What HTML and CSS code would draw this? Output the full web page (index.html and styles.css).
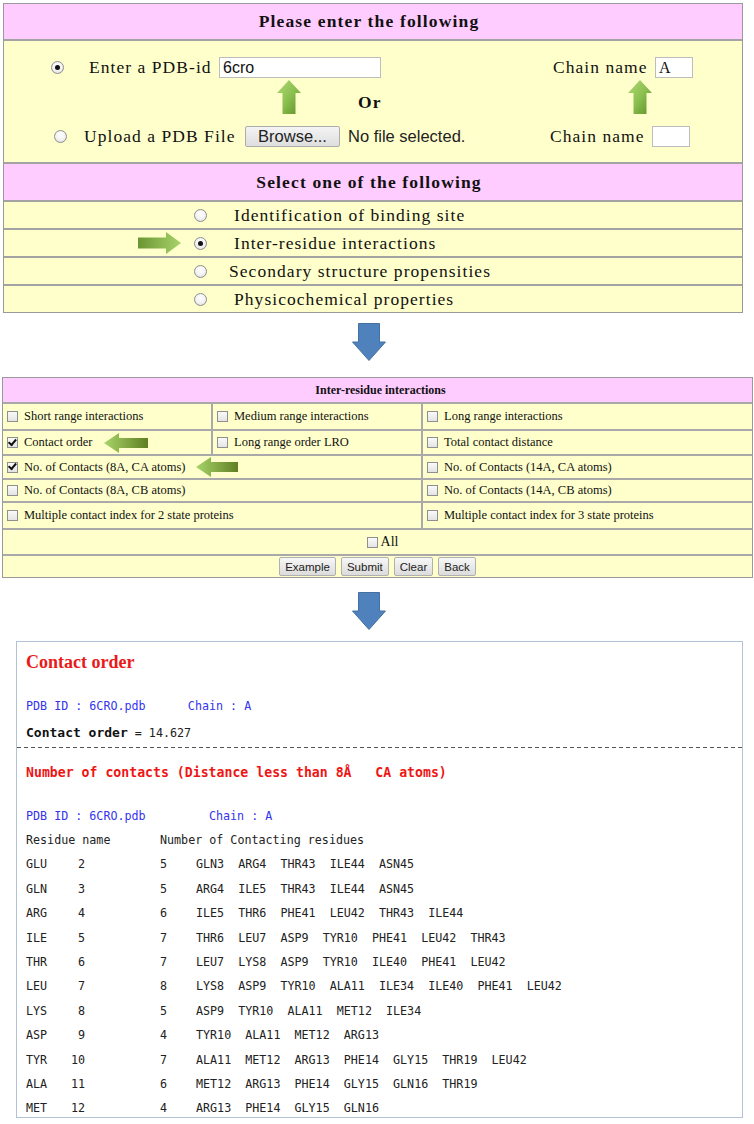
FILE: index.html
```html
<!DOCTYPE html>
<html>
<head>
<meta charset="utf-8">
<title>Inter-residue interactions</title>
<link rel="stylesheet" href="styles.css">
</head>
<body>
<svg class="defs" width="0" height="0" aria-hidden="true">
  <defs>
    <linearGradient id="gUp" x1="0" y1="0" x2="1" y2="1">
      <stop offset="0" stop-color="#b2da78"/>
      <stop offset="0.5" stop-color="#8cc050"/>
      <stop offset="1" stop-color="#5e8f2a"/>
    </linearGradient>
    <linearGradient id="gRight" x1="0" y1="0" x2="1" y2="0">
      <stop offset="0" stop-color="#6a9533"/>
      <stop offset="1" stop-color="#a8d46a"/>
    </linearGradient>
    <linearGradient id="gLeft" x1="0" y1="0" x2="1" y2="0">
      <stop offset="0" stop-color="#a8d46a"/>
      <stop offset="1" stop-color="#5f7f22"/>
    </linearGradient>
  </defs>
</svg>
<main class="page">
  <section class="panel">
    <div class="phead">Please enter the following</div>
    <div class="entry">
      <div class="erow r1">
        <span class="radio on"></span>
        <span class="elabel l1">Enter a PDB-id</span>
        <span class="tinput pdb">6cro</span>
        <span class="chain c1"><span class="clabel">Chain name</span><span class="tinput ch">A</span></span>
      </div>
      <div class="erow r2">
        <svg class="uparrow a1" width="24" height="34" viewBox="0 0 24 34"><path d="M12 0 L24 13 L18.5 13 L18.5 34 L5.5 34 L5.5 13 L0 13 Z" fill="url(#gUp)"/></svg>
        <span class="or">Or</span>
        <svg class="uparrow a2" width="24" height="34" viewBox="0 0 24 34"><path d="M12 0 L24 13 L18.5 13 L18.5 34 L5.5 34 L5.5 13 L0 13 Z" fill="url(#gUp)"/></svg>
      </div>
      <div class="erow r3">
        <span class="radio"></span>
        <span class="elabel l3">Upload a PDB File</span>
        <span class="fbtn">Browse...</span>
        <span class="nofile">No file selected.</span>
        <span class="chain c2"><span class="clabel">Chain name</span><span class="tinput ch"></span></span>
      </div>
    </div>
    <div class="phead sep">Select one of the following</div>
    <div class="opt"><span class="lead"></span><span class="radio"></span><span class="otext">Identification of binding site</span></div>
    <div class="opt"><span class="lead"><svg class="rarrow" width="43" height="22" viewBox="0 0 43 22"><path d="M0 5.5 H28 V0 L43 11 L28 22 V16.5 H0 Z" fill="url(#gRight)"/></svg></span><span class="radio on"></span><span class="otext">Inter-residue interactions</span></div>
    <div class="opt"><span class="lead"></span><span class="radio"></span><span class="otext shift">Secondary structure propensities</span></div>
    <div class="opt last"><span class="lead"></span><span class="radio"></span><span class="otext">Physicochemical properties</span></div>
  </section>

  <div class="downwrap d1">
    <svg class="downarrow" width="34" height="38" viewBox="0 0 34 38"><path d="M6.5 0.5 H27.5 V19 H33.5 L17 37.5 L0.5 19 H6.5 Z" fill="#4f81bd" stroke="#44719f" stroke-width="1"/></svg>
  </div>

  <section class="ri">
    <div class="rhead">Inter-residue interactions</div>
    <div class="cell"><span class="cb"></span>Short range interactions</div>
    <div class="cell"><span class="cb"></span>Medium range interactions</div>
    <div class="cell"><span class="cb"></span>Long range interactions</div>

    <div class="cell"><span class="cb on"></span>Contact order<svg class="larrow la1" width="44" height="20" viewBox="0 0 44 20"><path d="M0 10 L15 0 V5 H44 V15 H15 V20 Z" fill="url(#gLeft)"/></svg></div>
    <div class="cell"><span class="cb"></span>Long range order LRO</div>
    <div class="cell"><span class="cb"></span>Total contact distance</div>

    <div class="cell span2"><span class="cb on"></span>No. of Contacts (8A, CA atoms)<svg class="larrow la2" width="42" height="20" viewBox="0 0 42 20"><path d="M0 10 L15 0 V5 H42 V15 H15 V20 Z" fill="url(#gLeft)"/></svg></div>
    <div class="cell"><span class="cb"></span>No. of Contacts (14A, CA atoms)</div>

    <div class="cell span2"><span class="cb"></span>No. of Contacts (8A, CB atoms)</div>
    <div class="cell"><span class="cb"></span>No. of Contacts (14A, CB atoms)</div>

    <div class="cell span2"><span class="cb"></span>Multiple contact index for 2 state proteins</div>
    <div class="cell"><span class="cb"></span>Multiple contact index for 3 state proteins</div>

    <div class="cell full allrow"><span class="cb"></span>All</div>
    <div class="cell full btnrow">
      <span class="btn">Example</span>
      <span class="btn">Submit</span>
      <span class="btn">Clear</span>
      <span class="btn">Back</span>
    </div>
  </section>

  <div class="downwrap d2">
    <svg class="downarrow" width="34" height="38" viewBox="0 0 34 38"><path d="M6.5 0.5 H27.5 V19 H33.5 L17 37.5 L0.5 19 H6.5 Z" fill="#4f81bd" stroke="#44719f" stroke-width="1"/></svg>
  </div>

  <section class="out">
    <h2 class="otitle">Contact order</h2>
    <div class="mono blue pdb1">PDB ID : 6CRO.pdb      Chain : A</div>
    <div class="mono co"><b>Contact order</b> = 14.627</div>
    <div class="dash"></div>
    <div class="mono red ntitle">Number of contacts (Distance less than 8Å   CA atoms)</div>
    <div class="mono blue pdb2">PDB ID : 6CRO.pdb         Chain : A</div>
    <div class="mono rhdr"><span class="c-name">Residue name</span><span>Number of Contacting residues</span></div>
    <div class="rows">
      <div class="rrow"><span class="rn">GLU</span><span class="ri-n">2</span><span class="rc">5</span><span class="rl">GLN3  ARG4  THR43  ILE44  ASN45</span></div>
      <div class="rrow"><span class="rn">GLN</span><span class="ri-n">3</span><span class="rc">5</span><span class="rl">ARG4  ILE5  THR43  ILE44  ASN45</span></div>
      <div class="rrow"><span class="rn">ARG</span><span class="ri-n">4</span><span class="rc">6</span><span class="rl">ILE5  THR6  PHE41  LEU42  THR43  ILE44</span></div>
      <div class="rrow"><span class="rn">ILE</span><span class="ri-n">5</span><span class="rc">7</span><span class="rl">THR6  LEU7  ASP9  TYR10  PHE41  LEU42  THR43</span></div>
      <div class="rrow"><span class="rn">THR</span><span class="ri-n">6</span><span class="rc">7</span><span class="rl">LEU7  LYS8  ASP9  TYR10  ILE40  PHE41  LEU42</span></div>
      <div class="rrow"><span class="rn">LEU</span><span class="ri-n">7</span><span class="rc">8</span><span class="rl">LYS8  ASP9  TYR10  ALA11  ILE34  ILE40  PHE41  LEU42</span></div>
      <div class="rrow"><span class="rn">LYS</span><span class="ri-n">8</span><span class="rc">5</span><span class="rl">ASP9  TYR10  ALA11  MET12  ILE34</span></div>
      <div class="rrow"><span class="rn">ASP</span><span class="ri-n">9</span><span class="rc">4</span><span class="rl">TYR10  ALA11  MET12  ARG13</span></div>
      <div class="rrow"><span class="rn">TYR</span><span class="ri-n">10</span><span class="rc">7</span><span class="rl">ALA11  MET12  ARG13  PHE14  GLY15  THR19  LEU42</span></div>
      <div class="rrow"><span class="rn">ALA</span><span class="ri-n">11</span><span class="rc">6</span><span class="rl">MET12  ARG13  PHE14  GLY15  GLN16  THR19</span></div>
      <div class="rrow"><span class="rn">MET</span><span class="ri-n">12</span><span class="rc">4</span><span class="rl">ARG13  PHE14  GLY15  GLN16</span></div>
    </div>
  </section>
</main>
</body>
</html>
```

FILE: styles.css
```css
* { box-sizing: border-box; }
html, body { margin: 0; padding: 0; background: #fff; }
body { font-family: "Liberation Serif", "Times New Roman", serif; color: #111; }
.defs { position: absolute; width: 0; height: 0; overflow: hidden; }
.page { width: 754px; padding-top: 3px; }

/* ---------- top panel ---------- */
.panel {
  margin-left: 3px;
  width: 740px;
  border: 1px solid #9a9a9a;
  background: #ffffcc;
}
.phead {
  background: #ffccff;
  height: 37px;
  display: flex;
  align-items: center;
  justify-content: center;
  padding-right: 8px;
  font-weight: bold;
  font-size: 17.5px;
  letter-spacing: 1.15px;
  color: #111;
  border-bottom: 2px solid #a3a3a3;
}
.phead.sep { border-top: 2px solid #a3a3a3; height: 40px; }

.entry { height: 121px; padding-top: 14px; }
.erow { display: flex; align-items: center; font-size: 17.5px; letter-spacing: 1.05px; }
.r1 { height: 24px; padding-left: 47px; }
.r2 { height: 34px; padding-left: 273px; align-items: flex-start; margin-top: 1px; }
.r3 { height: 24px; padding-left: 50px; margin-top: 10px; }

.radio {
  flex: none;
  width: 13px; height: 13px;
  border-radius: 50%;
  border: 1px solid #8d8d8d;
  background: radial-gradient(circle at 50% 35%, #ffffff 0%, #f2f2f2 55%, #d6d6d6 100%);
  display: inline-flex; align-items: center; justify-content: center;
}
.radio.on::after {
  content: "";
  width: 5px; height: 5px; border-radius: 50%;
  background: #111;
}
.elabel { flex: none; white-space: nowrap; }
.l1 { width: 130px; margin-left: 25px; }
.l3 { width: 161px; margin-left: 17px; }
.tinput {
  flex: none;
  height: 21px;
  border: 1px solid #bdbdbd;
  background: #fff;
  font-family: "Liberation Sans", Arial, sans-serif;
  font-size: 16px;
  letter-spacing: 0;
  line-height: 19px;
  padding-left: 3px;
  color: #111;
}
.pdb { width: 162px; }
.ch { width: 38px; font-family: "Liberation Serif", serif; }
.chain { display: flex; align-items: center; margin-left: auto; }
.c1 { margin-right: 49px; }
.c2 { margin-right: 52px; }
.clabel { width: 102px; white-space: nowrap; }

.or { font-weight: bold; margin-left: 57px; margin-top: 12px; width: 22px; }
.a2 { margin-left: 248px; }

.fbtn {
  flex: none;
  width: 95px; height: 21px;
  border: 1px solid #adadad;
  border-radius: 2px;
  background: linear-gradient(#f4f4f4, #dedede);
  font-family: "Liberation Sans", Arial, sans-serif;
  font-size: 16.5px; letter-spacing: 0;
  display: flex; align-items: center; justify-content: center;
  color: #222;
}
.nofile {
  margin-left: 8px;
  font-family: "Liberation Sans", Arial, sans-serif;
  font-size: 16.5px; letter-spacing: 0;
  color: #222;
}

.opt {
  display: grid;
  grid-template-columns: 190px 13px auto;
  align-items: center;
  height: 28px;
  border-bottom: 2px solid #a3a3a3;
  font-size: 17.5px;
  letter-spacing: 1.05px;
}
.opt.last { border-bottom: none; height: 26px; }
.lead { display: flex; justify-content: flex-end; padding-right: 13px; }
.otext { margin-left: 27px; white-space: nowrap; }
.otext.shift { margin-left: 22px; }

/* ---------- blue arrows ---------- */
.downwrap { display: flex; justify-content: center; padding-right: 16px; }
.d1 { height: 64px; padding-top: 10px; }
.d2 { height: 63px; padding-top: 14px; }

/* ---------- inter-residue form ---------- */
.ri {
  margin-left: 2px;
  width: 751px;
  border: 1px solid #9a9a9a;
  background: #a9a9a9;
  display: grid;
  grid-template-columns: 208px 208px 329px;
  grid-template-rows: 24px 25px 23px 22px 21px 25px 24px 21px;
  gap: 2px;
  font-size: 12.5px;
}
.rhead {
  grid-column: 1 / -1;
  background: #ffccff;
  font-weight: bold;
  font-size: 12px;
  display: flex; align-items: center; justify-content: center;
  padding-left: 6px;
}
.cell {
  background: #ffffcc;
  display: flex; align-items: center;
  padding-left: 4px;
  color: #111;
  white-space: nowrap;
}
.span2 { grid-column: span 2; }
.full { grid-column: 1 / -1; }
.cb {
  flex: none;
  width: 11px; height: 11px;
  border: 1px solid #8f8f8f;
  background: linear-gradient(#fafafa, #e4e4e4);
  margin-right: 6px;
  display: inline-flex; align-items: center; justify-content: center;
}
.cb.on::after {
  content: "";
  width: 3px; height: 6px;
  border: solid #111;
  border-width: 0 2px 2px 0;
  transform: rotate(40deg) translate(-1px, -1px);
}
.la1 { margin-left: 12px; }
.la2 { margin-left: 11px; }
.allrow { justify-content: center; padding-left: 10px; font-size: 14px; }
.allrow .cb { margin-right: 3px; }
.btnrow { justify-content: center; gap: 5px; padding-left: 0; }
.btn {
  height: 19px;
  padding: 0 5px;
  border: 1px solid #b0b0b0;
  border-radius: 2px;
  background: linear-gradient(#f7f7f7, #dcdcdc);
  font-family: "Liberation Sans", Arial, sans-serif;
  font-size: 11.5px;
  display: flex; align-items: center;
  color: #222;
}

/* ---------- output box ---------- */
.out {
  margin-left: 16px;
  width: 727px;
  height: 477px;
  border: 1px solid #b3c2d6;
  background: #fff;
}
.otitle {
  margin: 8px 0 0 9px;
  font-size: 18px;
  line-height: 24px;
  font-weight: bold;
  color: #ea1a1a;
}
.mono {
  font-family: "DejaVu Sans Mono", "Liberation Mono", monospace;
  font-size: 11.7px;
  white-space: pre;
  padding-left: 9px;
  line-height: 24px;
  color: #222;
}
.mono b { font-size: 13px; font-weight: bold; color: #111; }
.blue { color: #3434ee; }
.red { color: #ee1515; font-weight: bold; font-size: 13.2px; }
.pdb1 { margin-top: 20px; }
.co { margin-top: 3px; }
.dash {
  margin-top: 2px;
  height: 1px;
  background: repeating-linear-gradient(90deg, #555 0 4px, transparent 4px 7px);
}
.ntitle { margin-top: 13px; }
.pdb2 { margin-top: 20px; line-height: 23px; }
.rhdr { display: flex; line-height: 24.4px; }
.c-name { width: 134px; }
.rows {
  padding-left: 9px;
  font-family: "DejaVu Sans Mono", "Liberation Mono", monospace;
  font-size: 11.7px;
  color: #222;
}
.rrow { display: flex; line-height: 24.4px; white-space: pre; }
.rn { width: 34px; }
.ri-n { width: 25px; text-align: right; }
.rc { width: 36px; margin-left: 75px; }
```
